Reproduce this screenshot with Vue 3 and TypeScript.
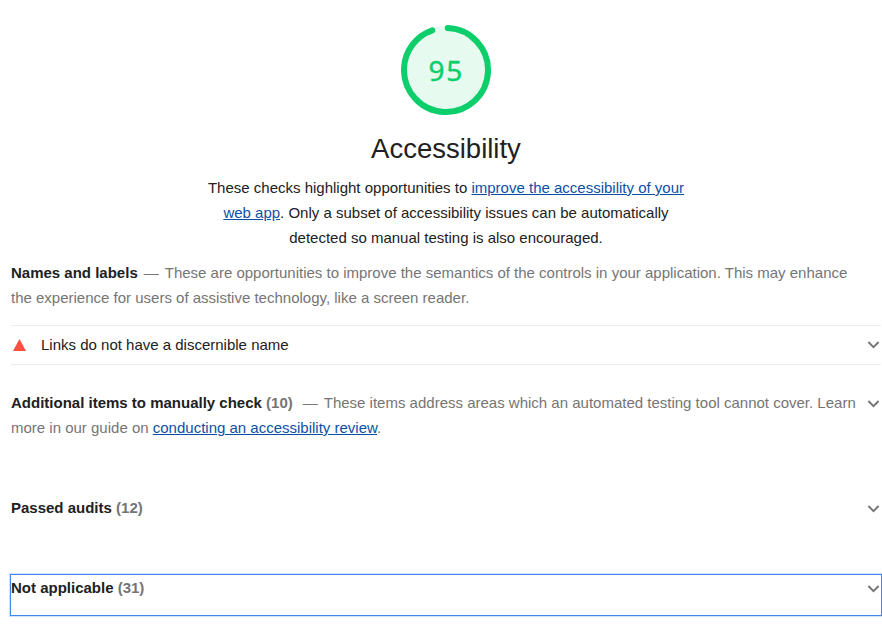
<script setup lang="ts">
const score: number = 95
const chevron = 'M0.4 1 L5.5 6.1 L10.6 1'
</script>

<template>
  <main class="report">
    <header class="category">
      <svg class="gauge" viewBox="0 0 90 90">
        <circle class="base" cx="45" cy="45" r="44" />
        <circle class="arc" cx="45" cy="45" r="42" pathLength="100" transform="rotate(-87.5 45 45)" />
        <text x="45.2" y="55.6">{{ score }}</text>
      </svg>
      <h1>Accessibility</h1>
      <p class="description">These checks highlight opportunities to <a href="#">improve the accessibility of your<br />web app</a>. Only a subset of accessibility issues can be automatically<br />detected so manual testing is also encouraged.</p>
    </header>
    <section class="names">
      <p class="text"><b>Names and labels</b><span class="dash">—</span>These are opportunities to improve the semantics of the controls in your application. This may enhance<br />the experience for users of assistive technology, like a screen reader.</p>
      <div class="audit">
        <svg class="triangle" viewBox="0 0 13 12"><path d="M6.5 0 L13 12 H0 Z" /></svg>
        <span class="title">Links do not have a discernible name</span>
        <svg class="chevron" viewBox="0 0 12 8"><path :d="chevron" /></svg>
      </div>
    </section>
    <section class="group manual">
      <p class="text"><b>Additional items to manually check <i>(10)</i></b><span class="dash">—</span>These items address areas which an automated testing tool cannot cover. Learn<br />more in our guide on <a href="#">conducting an accessibility review</a>.</p>
      <svg class="chevron" viewBox="0 0 12 8"><path :d="chevron" /></svg>
    </section>
    <section class="group passed">
      <p class="text"><b>Passed audits <i>(12)</i></b></p>
      <svg class="chevron" viewBox="0 0 12 8"><path :d="chevron" /></svg>
    </section>
    <section class="group focused">
      <p class="text"><b>Not applicable <i>(31)</i></b></p>
      <svg class="chevron" viewBox="0 0 12 8"><path :d="chevron" /></svg>
    </section>
  </main>
</template>

<style>
body { background: #fff; overflow: hidden; }
</style>

<style scoped>
.report { box-sizing: border-box; width: 882px; height: 626px; padding: 25px 0 0 10px; font: 15px/25px "Liberation Sans", Arial, sans-serif; color: #212121; white-space: nowrap; }
.category { display: flex; flex-direction: column; align-items: center; }
.gauge { width: 90px; height: 90px; }
.base { fill: #e6faf0; }
.arc { fill: none; stroke: #0cce6b; stroke-width: 6; stroke-linecap: round; stroke-dasharray: 94 100; }
.gauge text { font: 400 28px "Noto Sans", sans-serif; letter-spacing: 1.7px; fill: #0cce6b; stroke: #0cce6b; stroke-width: .4px; text-anchor: middle; }
h1 { margin: 18px 0 11px; font-size: 27.5px; line-height: 31px; font-weight: 400; }
.description { margin: 0; text-align: center; }
a { color: #0c50a6; }
.names { padding-top: 10px; }
.text { margin: 0; padding-left: 1px; color: #757575; }
b { color: #212121; }
i { color: #757575; font-style: normal; }
.dash { margin: 0 6px; }
.manual .dash { margin-left: 10px; }
.audit { display: flex; align-items: center; height: 38px; margin: 15px 1px 0 1px; border-top: 1px solid #ebebeb; border-bottom: 1px solid #ebebeb; }
.title { padding-bottom: 2px; }
.triangle { width: 13px; height: 12px; margin: 0 15px 0 2px; fill: #ff4e42; }
.chevron { width: 12px; height: 8px; flex: none; overflow: visible; fill: none; stroke: #757575; stroke-width: 1.9; margin-left: auto; margin-right: 2px; }
.audit .chevron { margin-right: 1px; }
.group .chevron { margin-top: 10px; }
.group { display: flex; align-items: flex-start; }
.manual { margin-top: 25px; }
.passed { margin-top: 55px; }
.focused { box-sizing: border-box; height: 42px; margin-top: 54px; border: 1px solid #4285f4; box-shadow: 0 0 0 1px #d3e2fb; }
.focused .text { padding-left: 0; }
.focused .chevron { margin-right: 1px; }
</style>
